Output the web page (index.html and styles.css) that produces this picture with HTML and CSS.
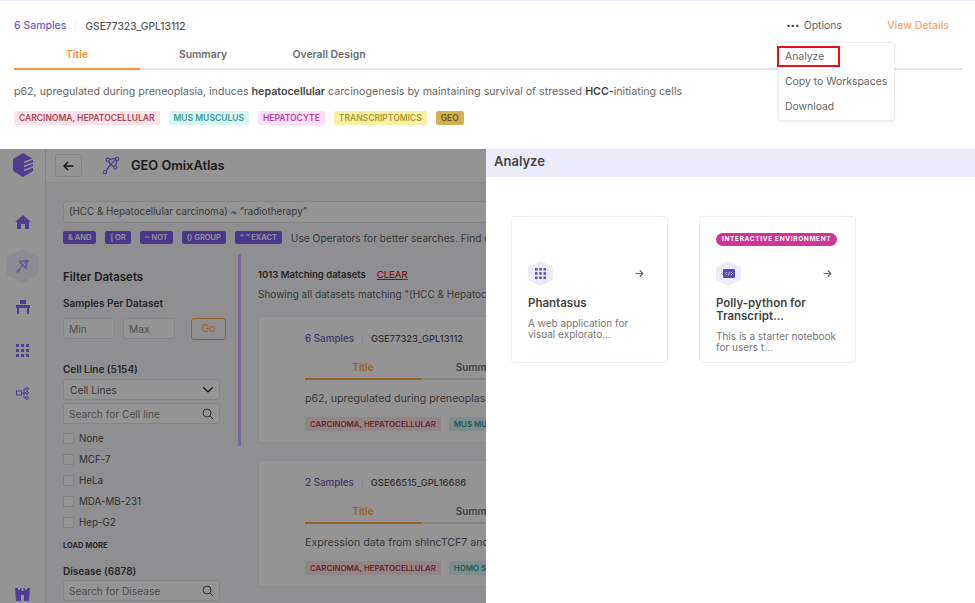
FILE: index.html
```html
<!DOCTYPE html>
<html lang="en">
<head>
    <meta charset="UTF-8">
    <title>GEO OmixAtlas - Analyze</title>
    <link rel="stylesheet" href="styles.css">
</head>
<body>

    <svg class="defs" width="0" height="0">
        <symbol id="atlas" viewBox="0 0 20 20">
            <path d="M6 4 L16 2 L14 12 L9 9 L4 16 M6 4 L9 9 M16 2 L9 9" fill="none" stroke="currentColor" stroke-width="1.400"/>
            <circle cx="6" cy="4" r="1.700" fill="#fff" stroke="currentColor" stroke-width="1.200"/>
            <circle cx="16" cy="3" r="1.700" fill="#fff" stroke="currentColor" stroke-width="1.200"/>
            <circle cx="14" cy="12" r="1.700" fill="#fff" stroke="currentColor" stroke-width="1.200"/>
            <circle cx="3" cy="17" r="1.700" fill="#fff" stroke="currentColor" stroke-width="1.200"/>
        </symbol>
        <symbol id="grid" viewBox="0 0 13 13">
            <path d="M0 0h3v3H0zM5 0h3v3H5zM10 0h3v3h-3zM0 5h3v3H0zM5 5h3v3H5zM10 5h3v3h-3zM0 10h3v3H0zM5 10h3v3H5zM10 10h3v3h-3z" fill="currentColor"/>
        </symbol>
        <symbol id="search" viewBox="0 0 12 12">
            <circle cx="5" cy="5" r="4" fill="none" stroke="currentColor" stroke-width="1"/>
            <path d="M8 8l3.400 3.400" stroke="currentColor" stroke-width="1"/>
        </symbol>
        <symbol id="arrow" viewBox="0 0 9 9">
            <path d="M0.500 4.500h7M4.800 1.500l3 3-3 3" fill="none" stroke="currentColor" stroke-width="1.200"/>
        </symbol>
    </svg>

    <!-- dataset card with the options menu open -->
    <section class="details">
        <div class="details-head">
            <span class="samples">6 Samples</span>
            <span class="dataset-id">GSE77323_GPL13112</span>
            <span class="options"><span class="dots">•••</span> Options</span>
            <a class="view-details">View Details</a>
        </div>
        <div class="tabs">
            <span class="tab active">Title</span>
            <span class="tab">Summary</span>
            <span class="tab">Overall Design</span>
        </div>
        <p class="title-text">p62, upregulated during preneoplasia, induces <b>hepatocellular</b> carcinogenesis by maintaining survival of stressed <b>HCC-</b>initiating cells</p>
        <div class="tags">
            <span class="tag red">CARCINOMA, HEPATOCELLULAR</span>
            <span class="tag teal">MUS MUSCULUS</span>
            <span class="tag pink">HEPATOCYTE</span>
            <span class="tag yellow">TRANSCRIPTOMICS</span>
            <span class="tag gold">GEO</span>
        </div>
        <ul class="menu">
            <li>Analyze</li>
            <li>Copy to Workspaces</li>
            <li>Download</li>
        </ul>
        <div class="highlight"></div>
    </section>

    <section class="split">
        <!-- dimmed app behind the drawer -->
        <div class="app">
            <nav class="rail">
                <svg class="logo" width="20" height="24" viewBox="0 0 20 24">
                    <path d="M10 0l10 6v12l-10 6-10-6V6z" fill="#8a69f6"/>
                    <path d="M11 9.500l9-3.500M11 13.500l9-3.500M11 17.500l9-3.500" stroke="#fff" stroke-width="1.600"/>
                </svg>
                <svg class="rail-icon home" width="16" height="14" viewBox="0 0 16 14">
                    <path d="M8 0L0 7h2v7h4V9h4v5h4V7h2z" fill="currentColor"/>
                </svg>
                <div class="rail-hex"><svg width="14" height="14"><use href="#atlas"/></svg></div>
                <svg class="rail-icon desk" width="14" height="14" viewBox="0 0 14 14">
                    <path d="M4 0h6v4H4zM0 5h14v3h-1v6h-2V8H3v6H1V8H0z" fill="currentColor"/>
                </svg>
                <svg class="rail-icon apps" width="13" height="13"><use href="#grid"/></svg>
                <svg class="rail-icon net" width="13" height="13" viewBox="0 0 13 13" fill="none" stroke="currentColor">
                    <rect x="0.500" y="4" width="5" height="4"/>
                    <path d="M5.500 6H8M8 2v9M8 2h1.500M8 6h1.500M8 11h1.500"/>
                    <circle cx="11" cy="2" r="1.400"/><circle cx="11" cy="6" r="1.400"/><circle cx="11" cy="11" r="1.400"/>
                </svg>
                <svg class="rail-icon binoculars" width="15" height="13" viewBox="0 0 15 13">
                    <path d="M0 0h2.500l1 2h1l1-2H6.500v3h2V0h1l1 2h1l1-2H15l-0.500 5L14 13H9V7H6v6H1L0.500 5z" fill="currentColor"/>
                </svg>
            </nav>
            <div class="app-main">
                <header class="app-head">
                    <span class="back">
                        <svg width="11" height="10" viewBox="0 0 11 10"><path d="M10.500 5H1M5 1L1 5l4 4" fill="none" stroke="#222" stroke-width="1.400"/></svg>
                    </span>
                    <svg class="atlas-icon" width="19" height="19"><use href="#atlas"/></svg>
                    <span class="app-title">GEO OmixAtlas</span>
                </header>
                <div class="app-body">
                    <div class="query">(HCC &amp; Hepatocellular carcinoma) ~ “radiotherapy”</div>
                    <div class="operators">
                        <span class="op">&amp; AND</span>
                        <span class="op">| OR</span>
                        <span class="op">~ NOT</span>
                        <span class="op">() GROUP</span>
                        <span class="op">“ ” EXACT</span>
                        <span class="op-hint">Use Operators for better searches. Find out more</span>
                    </div>
                    <div class="columns">
                        <aside class="filters">
                            <h3>Filter Datasets</h3>
                            <h4>Samples Per Dataset</h4>
                            <div class="range">
                                <span class="field small">Min</span>
                                <span class="field small">Max</span>
                                <span class="go">Go</span>
                            </div>
                            <h4 class="group">Cell Line (5154)</h4>
                            <div class="field select">Cell Lines
                                <svg width="10" height="6" viewBox="0 0 10 6"><path d="M0.500 0.500L5 5l4.500-4.500" fill="none" stroke="#222" stroke-width="1.200"/></svg>
                            </div>
                            <div class="field search">Search for Cell line <svg width="12" height="12"><use href="#search"/></svg></div>
                            <label class="check"><i></i>None</label>
                            <label class="check"><i></i>MCF-7</label>
                            <label class="check"><i></i>HeLa</label>
                            <label class="check"><i></i>MDA-MB-231</label>
                            <label class="check"><i></i>Hep-G2</label>
                            <div class="load-more">LOAD MORE</div>
                            <h4 class="group disease">Disease (6878)</h4>
                            <div class="field search">Search for Disease <svg width="12" height="12"><use href="#search"/></svg></div>
                        </aside>
                        <div class="scrollbar"></div>
                        <div class="results">
                            <div class="match"><b>1013 Matching datasets</b><a>CLEAR</a></div>
                            <div class="showing">Showing all datasets matching "(HCC &amp; Hepatocellular carcinoma)"</div>
                            <article class="result">
                                <div class="result-head"><span class="samples">6 Samples</span><span class="dataset-id">GSE77323_GPL13112</span></div>
                                <div class="result-tabs"><span class="tab active">Title</span><span class="tab">Summary</span></div>
                                <p class="title-text">p62, upregulated during preneoplasia, induces hepatocellular</p>
                                <div class="tags"><span class="tag red">CARCINOMA, HEPATOCELLULAR</span><span class="tag teal">MUS MUSCULUS</span></div>
                            </article>
                            <article class="result">
                                <div class="result-head"><span class="samples">2 Samples</span><span class="dataset-id">GSE66515_GPL16686</span></div>
                                <div class="result-tabs"><span class="tab active">Title</span><span class="tab">Summary</span></div>
                                <p class="title-text">Expression data from shlncTCF7 and shControl</p>
                                <div class="tags"><span class="tag red">CARCINOMA, HEPATOCELLULAR</span><span class="tag teal">HOMO SAPIENS</span></div>
                            </article>
                        </div>
                    </div>
                </div>
            </div>
            <div class="dim"></div>
        </div>

        <!-- analyze drawer -->
        <aside class="drawer">
            <h2 class="drawer-head">Analyze</h2>
            <div class="tools">
                <div class="tool">
                    <div class="pill-slot"></div>
                    <div class="tool-row">
                        <span class="hex"><svg width="11" height="11"><use href="#grid"/></svg></span>
                        <svg class="arrow" width="9" height="9"><use href="#arrow"/></svg>
                    </div>
                    <h5>Phantasus</h5>
                    <p>A web application for visual explorato...</p>
                </div>
                <div class="tool">
                    <div class="pill-slot"><span class="pill">INTERACTIVE ENVIRONMENT</span></div>
                    <div class="tool-row">
                        <span class="hex">
                            <svg width="12" height="9" viewBox="0 0 12 9"><rect width="12" height="9" rx="1" fill="currentColor"/><path d="M4 3L2.500 4.500 4 6M8 3l1.500 1.500L8 6M6.700 2.500L5.300 6.500" fill="none" stroke="#ecebfa" stroke-width="0.700"/></svg>
                        </span>
                        <svg class="arrow" width="9" height="9"><use href="#arrow"/></svg>
                    </div>
                    <h5>Polly-python for Transcript...</h5>
                    <p>This is a starter notebook for users t...</p>
                </div>
            </div>
        </aside>
    </section>

</body>
</html>
```

FILE: styles.css
```css
/* page */
html, body {
    margin: 0;
    padding: 0;
    height: 603px;
    overflow: hidden;
}
body {
    font-family: "Inter", "Open Sans", sans-serif;
    color: #4a4a4a;
    background: #fff;
    font-size: 10.400px;
}
.defs {
    position: absolute;
}
h2, h3, h4, h5, p, ul {
    margin: 0;
    padding: 0;
}

/* top card */
.details {
    position: relative;
    height: 149px;
    box-sizing: border-box;
    padding: 17px 12px 0 14px;
    border-top: 1px solid #e8e8f8;
    background: #fff;
}
.details-head {
    display: flex;
    align-items: center;
    height: 15px;
}
.samples {
    color: #6f5fb5;
    font-weight: 500;
    font-size: 10.500px;
    padding-right: 9px;
    border-right: 1px solid #f0f0f6;
}
.dataset-id {
    padding-left: 9px;
    font-weight: 500;
    font-size: 10.200px;
    color: #555;
}
.options {
    margin-left: auto;
    margin-right: 1px;
    font-size: 10.500px;
    color: #666;
}
.dots {
    font-size: 7px;
    letter-spacing: 0.500px;
    margin-right: 1px;
    color: #333;
    vertical-align: 1px;
}
.view-details {
    margin-left: 44px;
    margin-right: 14px;
    font-size: 10.500px;
    font-weight: 500;
    color: #f5a96b;
}
.tabs {
    display: flex;
    margin-top: 11px;
    border-bottom: 2px solid #e2e2e2;
}
.tab {
    width: 126px;
    height: 24px;
    line-height: 21px;
    margin-bottom: -2px;
    text-align: center;
    font-weight: 600;
    color: #6d6d6d;
    border-bottom: 2px solid transparent;
}
.tab.active {
    color: #f7963c;
    border-bottom-color: #f7963c;
}
.title-text {
    margin-top: 15px;
    line-height: 14px;
    font-size: 10.650px;
    color: #666;
    white-space: nowrap;
}
.title-text b {
    color: #444;
    font-weight: 600;
}
.tags {
    display: flex;
    gap: 9px;
    margin-top: 12px;
}
.tag {
    height: 14px;
    line-height: 14px;
    padding: 0 5px;
    border-radius: 2px;
    font-size: 8.500px;
    font-weight: 600;
    white-space: nowrap;
}
.red { background: #fde3e7; color: #a8495c; }
.teal { background: #d7f7f3; color: #3d9a90; }
.pink { background: #fde0f8; color: #b83f9f; }
.yellow { background: #fdf0a6; color: #a89a35; }
.gold { background: #d3b153; color: #6b5a22; }

/* options menu */
.menu {
    position: absolute;
    left: 778px;
    top: 41px;
    width: 117px;
    height: 79px;
    box-sizing: border-box;
    padding-top: 1px;
    list-style: none;
    background: #fff;
    border: 1px solid #eee;
    border-radius: 3px;
    box-shadow: 0 1px 3px rgba(0, 0, 0, 0.08);
}
.menu li {
    height: 25px;
    line-height: 25px;
    padding-left: 6px;
    color: #666;
    white-space: nowrap;
}
.highlight {
    position: absolute;
    left: 777px;
    top: 45px;
    width: 59px;
    height: 17px;
    border: 2px solid #e8101c;
}

/* split area */
.split {
    display: flex;
    height: 454px;
}
.app {
    position: relative;
    display: flex;
    width: 486px;
    overflow: hidden;
    background: #f7f7fa;
}
.dim {
    position: absolute;
    inset: 0;
    background: rgba(0, 0, 0, 0.42);
}
.rail {
    position: relative;
    width: 45px;
    flex-shrink: 0;
    display: flex;
    flex-direction: column;
    align-items: center;
    background: #fff;
    border-right: 1px solid #e4e4e4;
    color: #8a69f6;
}
.logo {
    margin-top: 4px;
}
.home {
    margin-top: 38px;
}
.rail-hex {
    display: flex;
    align-items: center;
    justify-content: center;
    width: 32px;
    height: 34px;
    margin-top: 20px;
    background: #f1effb;
    clip-path: polygon(50% 0, 100% 25%, 100% 75%, 50% 100%, 0 75%, 0 25%);
}
.desk {
    margin-top: 17px;
}
.apps {
    margin-top: 30px;
}
.net {
    margin-top: 30px;
}
.binoculars {
    position: absolute;
    left: 15px;
    top: 439px;
}
.app-main {
    flex: 1;
    min-width: 0;
}
.app-head {
    display: flex;
    align-items: center;
    height: 33px;
    padding-left: 9px;
    background: #fff;
    border-bottom: 1px solid #eee;
}
.back {
    display: flex;
    align-items: center;
    justify-content: center;
    width: 25px;
    height: 21px;
    border: 1px solid #e4e4e4;
    border-radius: 3px;
}
.atlas-icon {
    margin-left: 20px;
    color: #8a69f6;
}
.app-title {
    margin-left: 10px;
    font-size: 12.800px;
    font-weight: 600;
    color: #333;
}
.app-body {
    padding: 18px 0 0 17px;
}
.query {
    height: 20px;
    line-height: 20px;
    padding-left: 5px;
    margin-right: -40px;
    background: #fff;
    border: 1px solid #e4e4e4;
    border-radius: 3px;
    font-size: 9.800px;
    color: #666;
    white-space: nowrap;
}
.operators {
    display: flex;
    align-items: center;
    gap: 9px;
    margin-top: 8px;
    white-space: nowrap;
}
.op {
    height: 13px;
    line-height: 13px;
    padding: 0 5px;
    border-radius: 2px;
    background: #8060f0;
    color: #fff;
    font-size: 7.500px;
    font-weight: 600;
}
.op-hint {
    margin-left: 0;
    font-size: 10.200px;
    color: #666;
}
.columns {
    display: flex;
    margin-top: 10px;
}
.filters {
    width: 157px;
    flex-shrink: 0;
    padding-top: 16px;
}
.filters h3 {
    font-size: 11.500px;
    font-weight: 600;
    color: #333;
}
.filters h4 {
    margin-top: 13px;
    font-size: 10px;
    font-weight: 600;
    color: #444;
}
.filters h4.group {
    margin-top: 23px;
}
.filters h4.disease {
    margin-top: 15px;
}
.range {
    display: flex;
    margin-top: 9px;
}
.field {
    display: flex;
    align-items: center;
    justify-content: space-between;
    box-sizing: border-box;
    height: 21px;
    padding: 0 5px;
    background: #fff;
    border: 1px solid #e4e4e4;
    border-radius: 3px;
    color: #8a8a8a;
    font-size: 10.200px;
}
.field.small {
    flex: none;
    width: 52px;
    margin-right: 8px;
}
.go {
    flex: none;
    width: 35px;
    height: 22px;
    line-height: 20px;
    margin-left: 8px;
    box-sizing: border-box;
    text-align: center;
    border: 1px solid #ffa845;
    border-radius: 3px;
    color: #ffa845;
}
.select {
    margin-top: 4px;
    padding: 0 6px;
    color: #666;
}
.search {
    margin-top: 3px;
}
.search svg {
    color: #555;
}
.check {
    display: flex;
    align-items: center;
    gap: 5px;
    height: 21px;
    color: #555;
    font-size: 9.800px;
}
.check i {
    box-sizing: border-box;
    width: 11px;
    height: 11px;
    background: #fff;
    border: 1px solid #ddd;
}
.search + .check {
    margin-top: 4px;
}
.load-more {
    margin-top: 8px;
    font-size: 7.500px;
    font-weight: 700;
    color: #444;
}
.scrollbar {
    width: 3px;
    height: 192px;
    margin-left: 18px;
    flex-shrink: 0;
    background: #d5b8ff;
}
.results {
    margin-left: 17px;
    width: 228px;
    flex-shrink: 0;
    white-space: nowrap;
}
.match {
    margin-top: 15px;
    font-size: 9.500px;
    color: #444;
}
.match b {
    font-weight: 600;
}
.match a {
    margin-left: 11px;
    color: #e01c34;
    text-decoration: underline;
    font-weight: 500;
}
.showing {
    margin-top: 8px;
    overflow: hidden;
    font-size: 10px;
    color: #666;
}
.result {
    width: 300px;
    height: 127px;
    box-sizing: border-box;
    margin-top: 16px;
    padding: 14px 0 0 46px;
    background: #fff;
    border: 1px solid #ececf4;
    border-radius: 3px;
}
.result + .result {
    margin-top: 17px;
}
.result-head {
    display: flex;
    align-items: center;
    height: 14px;
}
.result .samples {
    font-size: 9.800px;
    padding-right: 8px;
}
.result .dataset-id {
    font-size: 9.400px;
    padding-left: 8px;
}
.result-tabs {
    display: flex;
    margin-top: 10px;
    border-bottom: 2px solid #e2e2e2;
}
.result-tabs .tab {
    width: 116px;
    height: 23px;
    line-height: 24px;
    font-size: 10px;
}
.result-tabs .tab.active {
    color: #ffa845;
    border-bottom-color: #ffa845;
}
.result .title-text {
    margin-top: 12px;
}
.result .tags {
    margin-top: 11px;
    gap: 8px;
}
.result .tag {
    font-size: 7.900px;
}

/* drawer */
.drawer {
    flex: 1;
    background: #fff;
}
.drawer-head {
    height: 28px;
    line-height: 25px;
    padding-left: 8px;
    background: #ecebfa;
    font-size: 13px;
    font-weight: 600;
    color: #444;
}
.tools {
    display: flex;
    gap: 31px;
    padding: 39px 0 0 25px;
}
.tool {
    width: 157px;
    height: 147px;
    box-sizing: border-box;
    padding: 16px 16px 0;
    border: 1px solid #eeeefa;
    border-radius: 3px;
}
.pill-slot {
    display: flex;
    height: 13px;
}
.pill {
    height: 13px;
    line-height: 13px;
    padding: 0 6px;
    border-radius: 7px;
    background: #cf3594;
    color: #fff;
    font-size: 6.500px;
    font-weight: 700;
    letter-spacing: 0.650px;
    white-space: nowrap;
}
.tool-row {
    display: flex;
    align-items: center;
    justify-content: space-between;
    margin-top: 15px;
    padding-right: 7px;
}
.hex {
    display: flex;
    align-items: center;
    justify-content: center;
    width: 25px;
    height: 25px;
    background: #ecebfa;
    color: #5b45b8;
    clip-path: polygon(50% 0, 100% 25%, 100% 75%, 50% 100%, 0 75%, 0 25%);
}
.arrow {
    color: #666;
}
.tool h5 {
    margin-top: 11px;
    font-size: 11.500px;
    line-height: 13px;
    font-weight: 600;
    color: #444;
}
.tool p {
    margin-top: 8px;
    font-size: 10px;
    line-height: 11px;
    color: #777;
}
```
